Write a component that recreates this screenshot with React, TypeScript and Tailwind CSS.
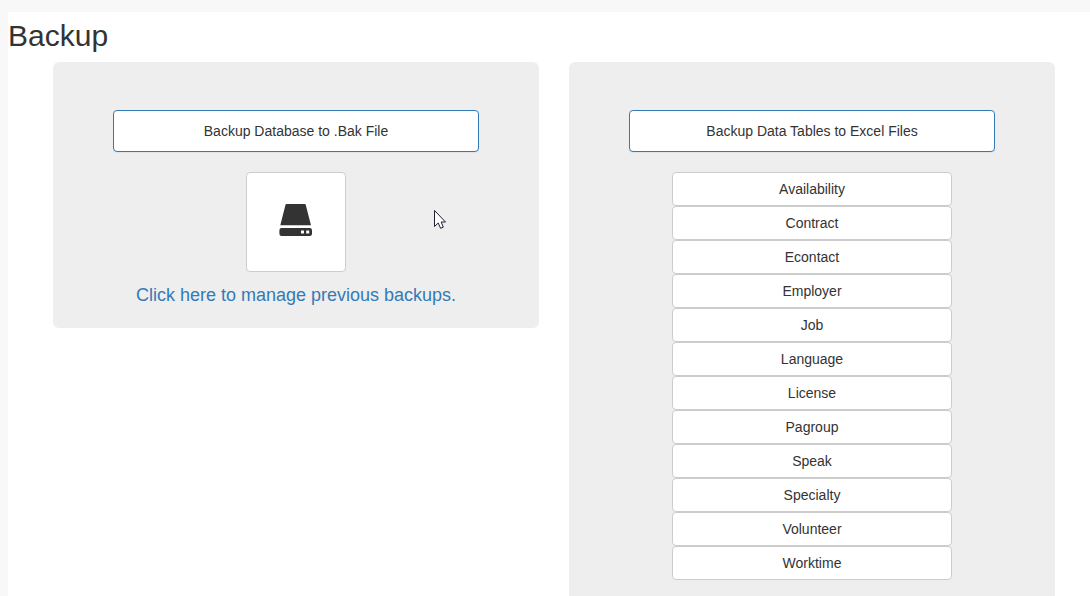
const tables = [
  "Availability",
  "Contract",
  "Econtact",
  "Employer",
  "Job",
  "Language",
  "License",
  "Pagroup",
  "Speak",
  "Specialty",
  "Volunteer",
  "Worktime",
];

function PanelTitle({ children }: { children: string }) {
  return (
    <h2 className="w-full rounded border border-[#337ab7] bg-white py-2.5 text-center text-sm shadow-[0_1px_1px_rgba(0,0,0,0.05)]">
      {children}
    </h2>
  );
}

function DriveIcon() {
  return (
    <svg width="34" height="34" viewBox="0 0 34 34" aria-hidden="true">
      <path d="M7.3 1H25.7Q26.5 1 26.7 1.8L32 22.3H1.3L6.5 1.8Q6.7 1 7.3 1Z" fill="#333333" />
      <path
        fill="#333333"
        fillRule="evenodd"
        d="M2.6 25H30.7Q33 25 33 27.3V30.7Q33 33 30.7 33H2.6Q0.4 33 0.4 30.7V27.3Q0.4 25 2.6 25ZM22 27.6V30.6H25V27.6ZM27.2 27.6V30.6H30.2V27.6Z"
      />
    </svg>
  );
}

export default function App() {
  return (
    <div className="min-h-screen bg-[#f8f8f8] pt-3 pl-2 font-['Liberation_Sans',Arial,sans-serif] text-[#333333]">
      <main className="relative bg-white pt-2">
        <h1 className="text-[30px] leading-8">Backup</h1>
        <div className="mt-2.5 flex items-start gap-[30px] pr-[35px] pl-[45px]">
          <section className="flex flex-1 flex-col items-center rounded-md bg-[#eeeeee] px-[60px] pt-12 pb-5">
            <PanelTitle>Backup Database to .Bak File</PanelTitle>
            <button
              type="button"
              aria-label="Backup database"
              className="mt-5 flex size-[100px] cursor-pointer items-center justify-center rounded border border-[#cccccc] bg-white pb-1"
            >
              <DriveIcon />
            </button>
            <a href="#previous" className="mt-2.5 text-lg leading-[26px] whitespace-nowrap text-[#337ab7]">
              Click here to manage previous backups.
            </a>
          </section>
          <section className="flex flex-1 flex-col items-center rounded-md bg-[#eeeeee] px-[60px] pt-12 pb-12">
            <PanelTitle>Backup Data Tables to Excel Files</PanelTitle>
            <div className="mt-5 flex w-[280px] flex-col">
              {tables.map((name) => (
                <button
                  key={name}
                  type="button"
                  className="cursor-pointer rounded border border-[#cccccc] bg-white py-1.5 text-sm"
                >
                  {name}
                </button>
              ))}
            </div>
          </section>
        </div>
        <svg
          className="pointer-events-none absolute top-[197px] left-[425px]"
          width="14"
          height="22"
          viewBox="0 0 14 22"
          aria-hidden="true"
        >
          <path
            d="M1.5 1.5V17.5L5.2 14L7.6 19.3L10.3 18.2L8.2 13H12.5Z"
            fill="#ffffff"
            stroke="#1d1d33"
            strokeWidth="1"
          />
        </svg>
      </main>
    </div>
  );
}
